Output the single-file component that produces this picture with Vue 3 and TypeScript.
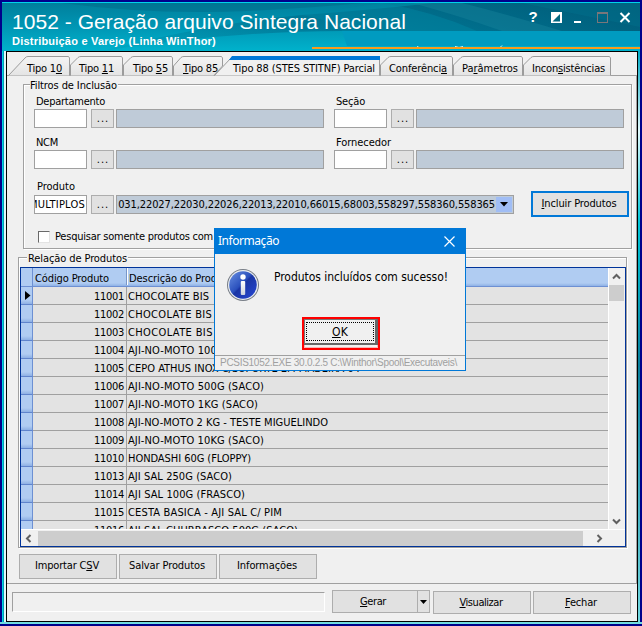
<script setup lang="ts">
import type { Directive } from 'vue'

interface Tab { w: number; x: number; tw: number; pre: string; key: string; post: string; kind?: string }
interface Row { code: string; name: string; w: number }

// Spreads a label over a fixed width by adjusting its letter spacing.
const vFit: Directive<HTMLElement, number> = {
  mounted(el, { value }) {
    const natural = el.getBoundingClientRect().width
    const count = (el.textContent ?? '').length
    if (count > 0) el.style.letterSpacing = `${(value - natural) / count}px`
  },
}

const tabs: Tab[] = [
  { w: 62, x: 19, tw: 35, pre: 'Tipo 1', key: '0', post: '', kind: 'first' },
  { w: 53, x: 9, tw: 35, pre: 'Tipo ', key: '1', post: '1' },
  { w: 50, x: 10, tw: 35, pre: 'Tipo ', key: '5', post: '5' },
  { w: 50, x: 10, tw: 35, pre: '', key: 'T', post: 'ipo 85', kind: 'last' },
  { w: 166, x: 19, tw: 142, pre: 'Tipo 88 (STES STITNF) Parcial', key: '', post: '', kind: 'active' },
  { w: 73, x: 9, tw: 58, pre: 'Conferênci', key: 'a', post: '' },
  { w: 70, x: 9, tw: 56, pre: 'Pa', key: 'r', post: 'âmetros' },
  { w: 88, x: 9, tw: 73, pre: 'Incon', key: 's', post: 'istências' },
]

function tabPath(t: Tab): string {
  const r = t.w - 0.5
  if (t.kind === 'first') return `M0.5 19.5 L17 2 Q18 0.5 20 0.5 H${r - 1} L${r} 2 V19.5`
  if (t.kind === 'active') return `M0.5 19.5 L17 2 Q18 0.5 20 0.5 H${r} V19.5`
  if (t.kind === 'last') return `M0.5 19.5 V10 L8 1.5 Q9 0.5 11 0.5 H${r - 1} L${r} 2 V10 L41 19.5`
  return `M0.5 19.5 V9 L8 1.5 Q9 0.5 11 0.5 H${r - 1} L${r} 2 V19.5`
}

const rows: Row[] = [
  { code: '11001', name: 'CHOCOLATE BIS', w: 81 },
  { code: '11002', name: 'CHOCOLATE BIS - BRANCO', w: 139 },
  { code: '11003', name: 'CHOCOLATE BIS - LARANJA', w: 141 },
  { code: '11004', name: 'AJI-NO-MOTO 100G (SACO)', w: 136 },
  { code: '11005', name: 'CEPO ATHUS INOX C/SUPORTE EM MADEIRA 04', w: 232 },
  { code: '11006', name: 'AJI-NO-MOTO 500G (SACO)', w: 136 },
  { code: '11007', name: 'AJI-NO-MOTO 1KG (SACO)', w: 130 },
  { code: '11008', name: 'AJI-NO-MOTO 2 KG - TESTE MIGUELINDO', w: 200 },
  { code: '11009', name: 'AJI-NO-MOTO 10KG (SACO)', w: 136 },
  { code: '11010', name: 'HONDASHI 60G (FLOPPY)', w: 123 },
  { code: '11013', name: 'AJI SAL 250G (SACO)', w: 104 },
  { code: '11014', name: 'AJI SAL 100G (FRASCO)', w: 117 },
  { code: '11015', name: 'CESTA BASICA - AJI SAL C/ PIM', w: 154 },
  { code: '11016', name: 'AJI SAL CHURRASCO 500G (SACO)', w: 170 },
]

const filters = [
  [{ label: 'Departamento', w: 69 }, { label: 'Seção', w: 29 }],
  [{ label: 'NCM', w: 22 }, { label: 'Fornecedor', w: 55 }],
]
</script>

<template>
  <div class="window">
    <header class="banner">
      <svg class="waves" width="638" height="48" viewBox="0 0 638 48" preserveAspectRatio="none">
        <defs>
          <linearGradient id="sea" x1="0" y1="0" x2="0" y2="1">
            <stop offset="0" stop-color="#007f9c" /><stop offset="0.5" stop-color="#0096b4" /><stop offset="1" stop-color="#00b2cc" />
          </linearGradient>
          <linearGradient id="deep" x1="0" y1="0" x2="1" y2="0">
            <stop offset="0" stop-color="#005a78" stop-opacity="0.05" /><stop offset="0.5" stop-color="#005a78" stop-opacity="0.55" /><stop offset="1" stop-color="#004f6c" stop-opacity="0.75" />
          </linearGradient>
        </defs>
        <rect width="638" height="48" fill="url(#sea)" />
        <path d="M100 48 Q210 20 300 12 Q380 6 430 0 H638 V28 H340 Q230 28 100 48Z" fill="url(#deep)" />
        <path d="M60 0 Q150 12 245 8 Q310 5 360 0Z" fill="#006b89" opacity="0.5" />
        <path d="M380 0 Q430 8 475 28 H340 Q340 20 300 12Z" fill="#0088a5" opacity="0.45" />
        <path d="M410 0 Q455 12 500 28 H560 Q500 10 460 0Z" fill="#16839c" opacity="0.45" />
        <path d="M520 0 Q570 10 638 24 V0Z" fill="#00748f" opacity="0.4" />
        <path d="M340 28 H638 V43 H345Z" fill="#009bc0" />
        <path d="M415 43.5 l2 1 M453 43.5 q4 2 8 0 M498 44.500 l2 -2" stroke="#d8f4fa" fill="none" />
        <rect x="310" y="44" width="328" height="2" fill="#f99c1c" />
      </svg>
      <div class="banner-row">
        <div class="titles">
          <h1><span v-fit="394">1052 - Geração arquivo Sintegra Nacional</span></h1>
          <p><span v-fit="204">Distribuição e Varejo (Linha WinThor)</span></p>
        </div>
        <svg class="controls" width="108" height="16" viewBox="0 0 108 16">
          <text x="0.500" y="13" class="help">?</text>
          <rect x="23" y="3" width="11" height="11" fill="#fff" /><path d="M24.500 12.500 L32 5 V12.500Z" fill="#00667f" />
          <path d="M46 13 H53" stroke="#fff" stroke-width="2" />
          <rect x="69.500" y="3.500" width="10" height="10" fill="none" stroke="#79767a" /><path d="M69 4 H80" stroke="#79767a" stroke-width="2" />
          <path d="M92.500 4 L101.500 13 M101.500 4 L92.500 13" stroke="#fff" stroke-width="2" />
        </svg>
      </div>
    </header>

    <main class="body">
      <nav class="tabs">
        <div v-for="(t, i) in tabs" :key="i" :class="['tab', t.kind]" :style="{ width: t.w + 'px', paddingLeft: t.x + 'px' }">
          <svg class="shape" :width="t.w" height="20">
            <defs><linearGradient id="tabfill" x1="0" y1="0" x2="0" y2="1"><stop offset="0" stop-color="#f4f4f4" /><stop offset="1" stop-color="#e4e4e4" /></linearGradient></defs>
            <path :d="tabPath(t)" :fill="t.kind === 'active' ? '#f0f0f0' : 'url(#tabfill)'" stroke="#9b9b9b" />
            <path v-if="t.kind === 'active'" d="M15 4 L18 0 H166 V4Z" fill="#0078d7" />
          </svg>
          <span v-fit="t.tw" class="tab-text">{{ t.pre }}<u>{{ t.key }}</u>{{ t.post }}</span>
        </div>
      </nav>

      <section class="panel">
        <div class="group filters">
          <div class="legend"><span v-fit="87">Filtros de Inclusão</span></div>
          <div v-for="(pair, r) in filters" :key="r" class="pair">
            <div v-for="f in pair" :key="f.label" class="field">
              <div class="label"><span v-fit="f.w">{{ f.label }}</span></div>
              <div class="inputs"><i class="box"></i><button class="dots">...</button><i class="desc"></i></div>
            </div>
          </div>
          <div class="product">
            <div class="field">
              <div class="label prod"><span v-fit="38">Produto</span></div>
              <div class="inputs">
                <div class="box multi"><span v-fit="56">MULTIPLOS</span></div>
                <button class="dots">...</button>
                <div class="combo">
                  <div class="codes"><span v-fit="383">2031,22027,22030,22026,22013,22010,66015,68003,558297,558360,558365</span></div>
                  <div class="drop"><svg width="8" height="5"><path d="M0 0H8L4 4.500Z" fill="#000" /></svg></div>
                </div>
              </div>
            </div>
            <button class="include"><span v-fit="75"><u>I</u>ncluir Produtos</span></button>
          </div>
          <div class="check"><i class="tick"></i><span v-fit="158">Pesquisar somente produtos com</span></div>
        </div>

        <div class="group relation">
          <div class="legend"><span v-fit="99">Relação de Produtos</span></div>
          <div class="grid">
            <div class="viewport">
              <div class="table">
                <div class="head">
                  <i class="gutter"></i>
                  <div class="hcode"><span v-fit="74">Código Produto</span></div>
                  <div class="hname"><span v-fit="104">Descrição do Produto</span></div>
                </div>
                <div v-for="(row, i) in rows" :key="row.code" class="row">
                  <div class="gutter"><svg v-if="i === 0" width="6" height="10"><path d="M0 0L5.500 4.500L0 9Z" fill="#000" /></svg></div>
                  <div class="code"><span v-fit="30">{{ row.code }}</span></div>
                  <div class="name"><span v-fit="row.w">{{ row.name }}</span></div>
                </div>
              </div>
              <div class="vscroll">
                <svg width="9" height="7"><path d="M1 5.500L4.500 2L8 5.500" /></svg>
                <i class="vthumb"></i>
                <svg class="down" width="9" height="7"><path d="M1 1.500L4.500 5L8 1.500" /></svg>
              </div>
            </div>
            <div class="hscroll">
              <svg width="7" height="9"><path d="M5.500 1L2 4.500L5.500 8" /></svg>
              <i class="hthumb"></i>
              <svg width="7" height="9"><path d="M1.500 1L5 4.500L1.500 8" /></svg>
            </div>
          </div>
        </div>

        <div class="actions">
          <button><span v-fit="64">Importar C<u>S</u>V</span></button>
          <button><span v-fit="76">Salvar Produtos</span></button>
          <button><span v-fit="60">Informações</span></button>
        </div>
      </section>

      <footer class="bottom">
        <i class="status"></i>
        <div class="split">
          <button><span v-fit="26"><u>G</u>erar</span></button>
          <button class="arrow"><svg width="7" height="4"><path d="M0 0H7L3.500 4Z" fill="#000" /></svg></button>
        </div>
        <button class="view"><span v-fit="43"><u>V</u>isualizar</span></button>
        <button><span v-fit="32"><u>F</u>echar</span></button>
      </footer>
    </main>

    <div class="dialog">
      <div class="dtitle">
        <span v-fit="61">Informação</span>
        <svg width="11" height="11"><path d="M0.500 0.500L10.500 10.500M10.500 0.500L0.500 10.500" stroke="#fff" stroke-width="1.200" /></svg>
      </div>
      <div class="dmain">
        <svg width="34" height="34" viewBox="0 0 34 34">
          <defs>
            <linearGradient id="orb" x1="0" y1="0" x2="1" y2="1"><stop offset="0" stop-color="#6b92e2" /><stop offset="0.450" stop-color="#2a50bd" /><stop offset="0.500" stop-color="#1a35a4" /><stop offset="1" stop-color="#2748d6" /></linearGradient>
            <linearGradient id="stem" x1="0" y1="0" x2="0" y2="1"><stop offset="0" stop-color="#fff" /><stop offset="1" stop-color="#ccd2de" /></linearGradient>
          </defs>
          <circle cx="17" cy="17" r="16" fill="#777d86" /><circle cx="17" cy="17" r="15" fill="#e9edf1" /><circle cx="17" cy="17" r="13.800" fill="url(#orb)" />
          <circle cx="17" cy="9" r="2.700" fill="#fff" /><rect x="14.800" y="13" width="4.400" height="14" rx="1" fill="url(#stem)" />
        </svg>
        <p><span v-fit="174">Produtos incluídos com sucesso!</span></p>
      </div>
      <div class="ok-frame"><button class="ok"><span class="focus"><span v-fit="16"><u>O</u>K</span></span></button></div>
      <div class="dfoot"><span v-fit="237">PCSIS1052.EXE 30.0.2.5 C:\Winthor\Spool\Executaveis\</span></div>
    </div>
  </div>
</template>

<style>
body { margin: 0; overflow: hidden; }
</style>

<style scoped>
* { box-sizing: border-box; }
.window {
  position: relative; width: 642px; height: 626px; padding: 2px; display: flex; flex-direction: column;
  background: #00008b; box-shadow: inset 0 -2px 0 #00008b, inset 0 -4px 0 #72dce0;
  font: 11px/14px "DejaVu Sans Condensed", "Noto Sans", sans-serif; color: #000; white-space: nowrap;
}
button { font: inherit; color: inherit; margin: 0; padding: 0; display: flex; align-items: center; justify-content: center; background: #e1e1e1; border: 1px solid #adadad; }
i { display: block; }
u { text-decoration: underline; text-underline-offset: 1px; text-decoration-thickness: 1px; }
.banner { position: relative; height: 49px; border-top: 1px solid #00d3ea; color: #fff; background: #00b3cc; }
.waves { position: absolute; left: 0; top: 0; }
.banner-row { position: relative; display: flex; justify-content: space-between; padding: 7px 4px 0 10px; }
h1 { margin: 0; font: 21px/24px "Liberation Sans", Arial, sans-serif; }
.titles p { margin: 0; font: bold 11px/14px "Liberation Sans", Arial, sans-serif; }
.controls { margin-top: -1px; }
.help { font: bold 15px "Liberation Sans", sans-serif; fill: #fff; }
.body {
  position: relative; height: 571px; padding: 4px 0 0; margin: 0 2px 0 4px; background: #f0f0f0;
  border: 1px solid #000; display: flex; flex-direction: column;
}
.body::before { content: ""; position: absolute; left: -5px; top: -1px; width: 4px; height: 571px; background: linear-gradient(90deg, #00d4e5 0 1px, #009fb9 1px 2px, #dff9fb 2px 4px); }
.body::after { content: ""; position: absolute; right: -3px; top: -1px; width: 2px; height: 571px; background: linear-gradient(#00a9c4, #dff9fb 14%, #00c7d9 30%, #087f9c 55%, #72d9e0); }
.tabs { height: 20px; display: flex; padding-left: 1px; }
.tab { position: relative; height: 20px; flex: none; padding-top: 6px; }
.active { margin-left: -9px; z-index: 1; }
.shape { position: absolute; left: 0; top: 0; display: block; }
.tab-text { position: relative; display: inline-block; }
.panel { height: 509px; border-top: 1px solid #a0a0a0; border-bottom: 1px solid #a0a0a0; border-right: 1px solid #a0a0a0; padding: 8px 4px 0 11px; margin-top: -1px; }
.group { position: relative; border: 1px solid #a0a0a0; box-shadow: 1px 1px 0 #fff, inset 1px 1px 0 #fff; }
.legend { position: absolute; top: -6px; left: 6px; padding: 0 1px 0 0; background: #f0f0f0; }
.filters { height: 165px; margin-left: 5px; padding: 10px 0 0 10px; }
.pair { display: flex; gap: 10px; height: 41px; }
.field { flex: none; }
.label { height: 14px; padding-left: 2px; }
.label.prod { padding-left: 3px; height: 16px; padding-top: 1px; }
.inputs { display: flex; height: 19px; }
.box { width: 53px; background: #fff; border: 1px solid #a0a0a0; margin-right: 4px; }
.dots { width: 23px; margin-right: 2px; letter-spacing: 1px; padding-bottom: 0; padding-left: 1px; }
.desc { width: 208px; background: #bfcbd8; border: 1px solid #a0a0a0; }
.multi { overflow: hidden; display: flex; align-items: center; justify-content: flex-end; padding-right: 1px; }
.product { display: flex; gap: 17px; align-items: flex-start; margin-top: 2px; }
.combo { width: 398px; display: flex; background: #bfcbd8; border: 1px solid #a0a0a0; padding: 1px; }
.codes { flex: 1; overflow: hidden; display: flex; align-items: center; justify-content: flex-end; padding-right: 1px; height: 15px; }
.drop { width: 16px; background: #a0bdf5; display: flex; align-items: center; justify-content: center; }
.include { width: 98px; height: 26px; border: 2px solid #0078d7; margin-top: 12px; }
.include span { margin-left: -2px; }
.check { display: flex; align-items: center; gap: 5px; margin: 13px 0 0 4px; }
.tick { width: 12px; height: 12px; background: #fff; border: 1px solid #696969; border-right-color: #e3e3e3; border-bottom-color: #e3e3e3; }
.relation { height: 291px; margin-top: 8px; padding: 9px 0 0 1px; width: 609px; }
.relation .legend { left: 8px; top: -6px; padding-left: 1px; }
.grid { width: 606px; height: 280px; border: 1px solid #003399; background: #f0f0f0; }
.viewport { display: flex; height: 262px; border-bottom: 1px solid #fff; }
.table { width: 587px; overflow: hidden; background: #e3e3e3; }
.head { height: 19px; display: flex; background: linear-gradient(#b0ccf2 0 15px, #8fb2e6 18px); border-bottom: 1px solid #6d90d3; }
.gutter { width: 12px; flex: none; border-right: 1px solid #6d90d3; background: #b0ccf2; }
.hcode { width: 94px; padding: 4px 0 0 2px; }
.hname { border-left: 1px solid #fff; box-shadow: -1px 0 #7896c8; padding: 4px 0 0 1px; margin-bottom: 1px; }
.row { height: 18px; display: flex; border-bottom: 1px solid #a0a0a0; }
.row .gutter { height: 18px; background: linear-gradient(#b0ccf2 0 13px, #8eb0e4 17px); border-bottom: 1px solid #6084cc; padding: 4px 0 0 4px; }
.row .gutter svg { display: block; }
.code { width: 94px; border-right: 1px solid #a0a0a0; text-align: right; padding: 3px 2px 0 0; height: 17px; }
.name { padding: 3px 0 0 1px; }
.vscroll { width: 17px; border-left: 1px solid #fff; display: flex; flex-direction: column; align-items: center; padding: 5px 1px 4px 0; }
.vthumb { width: 15px; height: 16px; background: #cdcdcd; margin-top: 5px; }
.down { margin-top: auto; }
.vscroll svg, .hscroll svg { display: block; }
.vscroll path, .hscroll path { fill: none; stroke: #606060; stroke-width: 2; }
.hscroll { height: 16px; display: flex; align-items: center; padding-left: 4px; }
.hthumb { width: 545px; height: 15px; background: #cdcdcd; margin: 0 13px 0 6px; }
.actions { display: flex; gap: 2px; margin: 6px 0 0 1px; }
.actions button { width: 98px; height: 25px; padding: 0 2px 1px 0; }
.bottom { height: 37px; display: flex; padding: 6px 0 0 5px; }
.status { width: 313px; flex: none; height: 20px; border: 1px solid #a0a0a0; border-right-color: #fff; border-bottom-color: #fff; margin: 2px 7px 0 0; }
.bottom > button { width: 98px; flex: none; height: 23px; margin: 1px 2px 0 0; padding-right: 2px; }
.split { display: flex; flex: none; height: 23px; width: 98px; margin-right: 3px; }
.split button { width: 86px; padding-right: 4px; }
.split .arrow { width: 13px; margin-left: -1px; padding: 0; }
.dialog { position: absolute; z-index: 5; left: 214px; top: 228px; width: 252px; height: 143px; background: #f0f0f0; border: 1px solid #0078d7; display: flex; flex-direction: column; }
.dtitle { height: 25px; background: #0078d7; color: #fff; font: 12px/16px "Noto Sans", "Open Sans", sans-serif; display: flex; justify-content: space-between; align-items: center; padding: 0 10px 1px 3px; }
.dmain { display: flex; height: 63px; padding: 14px 0 0 11px; }
.dmain p { margin: 1px 0 0 14px; font-size: 12px; line-height: 16px; }
.ok-frame { width: 78px; height: 33px; margin-left: 87px; border: 2px solid #f00; box-shadow: inset 0 0 0 1px #f8b5b5; }
.ok { width: 74px; height: 26px; background: #f0f0f0; border: 1px solid #777; border-right: 3px solid #666; border-bottom: 2px solid #666; padding: 1px; }
.focus { width: 68px; height: 19px; border: 1px dotted #000; display: flex; align-items: center; justify-content: center; font-size: 12px; }
.dfoot { margin-top: auto; height: 15px; border-top: 1px solid #a0a0a0; padding-left: 5px; font: 10px/14px "Liberation Sans", Arial, sans-serif; color: #a0a0a0; }
</style>
